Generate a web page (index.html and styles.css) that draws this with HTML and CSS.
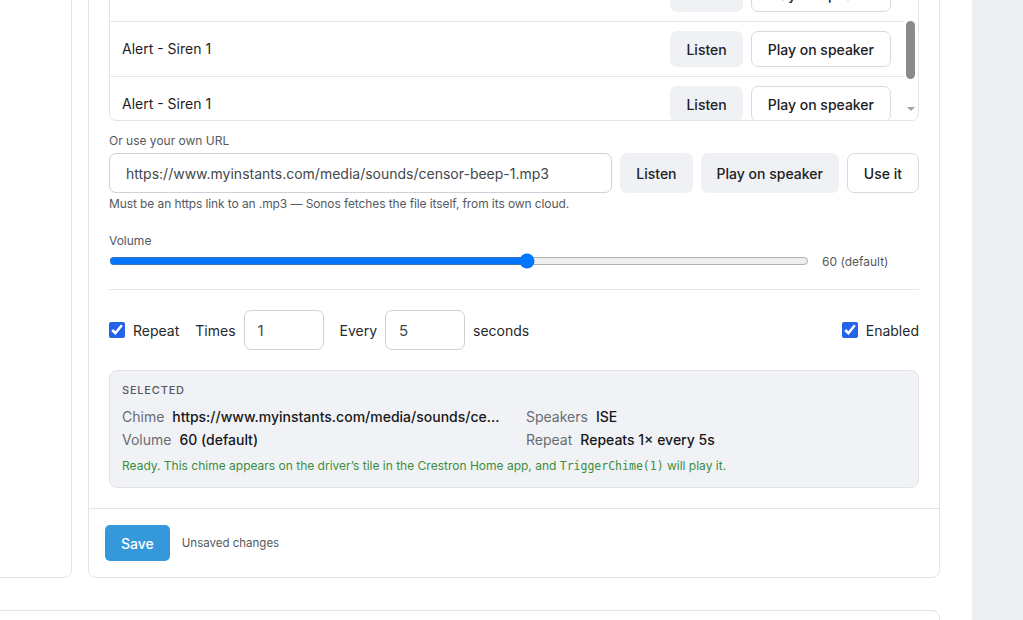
FILE: index.html
```html
<!DOCTYPE html>
<html lang="en">
<head>
<meta charset="utf-8">
<title>Chime</title>
<link rel="stylesheet" href="styles.css">
</head>
<body>
<div class="app">
  <main class="content">
    <div class="grid">
      <section class="card side-card"></section>
      <section class="card chime-card">
        <div class="card-body">
          <div class="sound-list">
            <div class="sound-rows">
              <div class="sound-row">
                <span class="sound-name">Alert - Siren 1</span>
                <button class="btn btn-soft">Listen</button>
                <button class="btn btn-outline">Play on speaker</button>
              </div>
              <div class="sound-row">
                <span class="sound-name">Alert - Siren 1</span>
                <button class="btn btn-soft">Listen</button>
                <button class="btn btn-outline">Play on speaker</button>
              </div>
              <div class="sound-row">
                <span class="sound-name">Alert - Siren 1</span>
                <button class="btn btn-soft">Listen</button>
                <button class="btn btn-outline">Play on speaker</button>
              </div>
              <div class="sound-row">
                <span class="sound-name">Alert - Siren 1</span>
                <button class="btn btn-soft">Listen</button>
                <button class="btn btn-outline">Play on speaker</button>
              </div>
            </div>
            <div class="fake-scrollbar">
              <span class="scroll-thumb"></span>
              <span class="scroll-arrow"></span>
            </div>
          </div>

          <div class="field-label url-label">Or use your own URL</div>
          <div class="url-row">
            <input class="text-input url-input" type="text" value="https://www.myinstants.com/media/sounds/censor-beep-1.mp3">
            <button class="btn btn-soft btn-tall">Listen</button>
            <button class="btn btn-soft btn-tall">Play on speaker</button>
            <button class="btn btn-outline btn-tall">Use it</button>
          </div>
          <p class="hint">Must be an https link to an .mp3 — Sonos fetches the file itself, from its own cloud.</p>

          <div class="field-label vol-label">Volume</div>
          <div class="volume-row">
            <input class="volume" type="range" min="0" max="100" value="60">
            <span class="vol-value">60 (default)</span>
          </div>

          <hr class="divider">

          <div class="repeat-row">
            <label class="inline-field">
              <input class="check" type="checkbox" checked>
              <span>Repeat</span>
            </label>
            <label class="inline-field">
              <span>Times</span>
              <input class="num-input" type="text" value="1">
            </label>
            <label class="inline-field">
              <span>Every</span>
              <input class="num-input" type="text" value="5">
              <span>seconds</span>
            </label>
            <label class="inline-field enabled">
              <input class="check" type="checkbox" checked>
              <span>Enabled</span>
            </label>
          </div>

          <div class="summary">
            <div class="summary-title">SELECTED</div>
            <div class="summary-grid">
              <div class="summary-item"><span class="summary-key">Chime</span><span class="summary-val">https://www.myinstants.com/media/sounds/censor-beep-1.mp3</span></div>
              <div class="summary-item"><span class="summary-key">Speakers</span><span class="summary-val">ISE</span></div>
              <div class="summary-item"><span class="summary-key">Volume</span><span class="summary-val">60 (default)</span></div>
              <div class="summary-item"><span class="summary-key">Repeat</span><span class="summary-val">Repeats 1× every 5s</span></div>
            </div>
            <p class="summary-note">Ready. This chime appears on the driver’s tile in the Crestron Home app, and <code>TriggerChime(1)</code> will play it.</p>
          </div>
        </div>
        <div class="card-footer">
          <button class="btn-save">Save</button>
          <span class="unsaved">Unsaved changes</span>
        </div>
      </section>
      <section class="card wide-card"></section>
    </div>
  </main>
  <aside class="side-panel"></aside>
</div>
</body>
</html>
```

FILE: styles.css
```css
html, body {
  margin: 0;
  padding: 0;
}

body {
  font-family: Inter, "Noto Sans", "Liberation Sans", sans-serif;
  color: #1d1d1f;
  background: #ffffff;
  height: 620px;
  overflow: hidden;
}

.app {
  display: flex;
  height: 620px;
}

.content {
  flex: 1;
  min-width: 0;
  overflow: hidden;
}

.side-panel {
  width: 51px;
  flex: none;
  background: #eeeff3;
}

.grid {
  display: grid;
  grid-template-columns: 272px 852px;
  column-gap: 16px;
  row-gap: 32px;
  margin: -81px 0 0 -200px;
}

.card {
  box-sizing: border-box;
  border: 1px solid #e3e4e8;
  border-radius: 8px;
  background: #ffffff;
}

.wide-card {
  grid-column: 1 / -1;
  height: 200px;
}

.card-body {
  padding: 20px;
}

/* sound list */
.sound-list {
  position: relative;
  box-sizing: border-box;
  height: 181px;
  border: 1px solid #e3e4e8;
  border-radius: 7px;
  overflow: hidden;
}

.sound-rows {
  margin: -29px 14px 0 0;
}

.sound-row {
  display: flex;
  align-items: center;
  gap: 8px;
  height: 54px;
  padding: 0 13px 0 12px;
  border-bottom: 1px solid #e6e7ea;
}

.sound-name {
  flex: 1;
  font-size: 14px;
  line-height: 18px;
  padding-bottom: 1px;
  color: #1d1d1f;
}

.fake-scrollbar {
  position: absolute;
  top: 0;
  right: 0;
  bottom: 0;
  width: 14px;
}

.scroll-thumb {
  position: absolute;
  top: 80px;
  left: 2px;
  width: 9px;
  height: 58px;
  border-radius: 5px;
  background: #8b8b8b;
}

.scroll-arrow {
  position: absolute;
  top: 166px;
  left: 3px;
  width: 0;
  height: 0;
  border-left: 4px solid transparent;
  border-right: 4px solid transparent;
  border-top: 4px solid #a3a3a3;
}

/* buttons */
.btn {
  box-sizing: border-box;
  height: 36px;
  padding: 0 16px;
  border-radius: 7px;
  border: 1px solid transparent;
  font-family: inherit;
  font-size: 14px;
  font-weight: 500;
  color: #202124;
  white-space: nowrap;
  cursor: pointer;
}

.btn-soft {
  background: #f0f1f4;
  border: 0;
}

.btn-outline {
  background: #ffffff;
  border-color: #d9dadf;
}

.btn-tall {
  height: 40px;
}

/* url */
.field-label {
  font-size: 12px;
  line-height: 16px;
  color: #555a60;
}

.url-label {
  margin-top: 12px;
}

.url-row {
  display: flex;
  gap: 8px;
  margin-top: 4px;
}

.text-input {
  box-sizing: border-box;
  height: 40px;
  border: 1px solid #cfd0d5;
  border-radius: 7px;
  padding: 0 16px;
  font-family: inherit;
  font-size: 14px;
  color: #44474c;
  background: #ffffff;
}

.url-input {
  flex: 1;
  min-width: 0;
}

.hint {
  margin: 3px 0 0;
  font-size: 12px;
  line-height: 16px;
  letter-spacing: -0.1px;
  color: #555a60;
}

/* volume */
.vol-label {
  margin-top: 20px;
  padding-top: 1px;
  line-height: 15px;
}

.volume-row {
  display: flex;
  align-items: center;
  gap: 13px;
  margin-top: 5px;
}

.volume {
  width: 700px;
  height: 16px;
  margin: 0;
}

.vol-value {
  font-size: 12px;
  color: #555a60;
}

.divider {
  margin: 20px 0 0;
  border: 0;
  border-top: 1px solid #e6e7ea;
}

/* repeat */
.repeat-row {
  display: flex;
  align-items: center;
  gap: 16px;
  margin-top: 20px;
  font-size: 14px;
  color: #26282b;
}

.inline-field {
  display: flex;
  align-items: center;
  gap: 8px;
}

.enabled {
  margin-left: auto;
}

.check {
  width: 16px;
  height: 16px;
  margin: 0;
  accent-color: #2563eb;
}

.num-input {
  box-sizing: border-box;
  width: 80px;
  height: 40px;
  border: 1px solid #cfd0d5;
  border-radius: 7px;
  padding: 0 13px;
  font-family: inherit;
  font-size: 15px;
  color: #44474c;
  background: #ffffff;
}

/* summary */
.summary {
  margin-top: 20px;
  padding: 12px 12px 13px;
  background: #f1f2f5;
  border: 1px solid #e2e3e7;
  border-radius: 8px;
}

.summary-title {
  font-size: 11px;
  line-height: 14px;
  font-weight: 500;
  letter-spacing: 0.8px;
  color: #55595f;
}

.summary-grid {
  display: grid;
  grid-template-columns: 1fr 1fr;
  column-gap: 24px;
  row-gap: 3px;
  margin-top: 10px;
}

.summary-item {
  display: flex;
  gap: 8px;
  min-width: 0;
  font-size: 14px;
  line-height: 20px;
  white-space: nowrap;
}

.summary-key {
  color: #686c72;
}

.summary-val {
  min-width: 0;
  overflow: hidden;
  text-overflow: ellipsis;
  font-weight: 500;
  color: #16181b;
}

.summary-note {
  margin: 8px 0 0;
  font-size: 12px;
  line-height: 16px;
  color: #3b8e3f;
}

.summary-note code {
  font-family: "DejaVu Sans Mono", "Liberation Mono", monospace;
  font-size: 11.5px;
}

/* footer */
.card-footer {
  display: flex;
  align-items: center;
  gap: 12px;
  padding: 16px;
  border-top: 1px solid #e3e4e8;
}

.btn-save {
  height: 36px;
  padding: 0 16px;
  border: 0;
  border-radius: 5px;
  background: #3498db;
  color: #ffffff;
  font-family: inherit;
  font-size: 14px;
  font-weight: 500;
}

.unsaved {
  font-size: 11.5px;
  color: #555a60;
}
```
